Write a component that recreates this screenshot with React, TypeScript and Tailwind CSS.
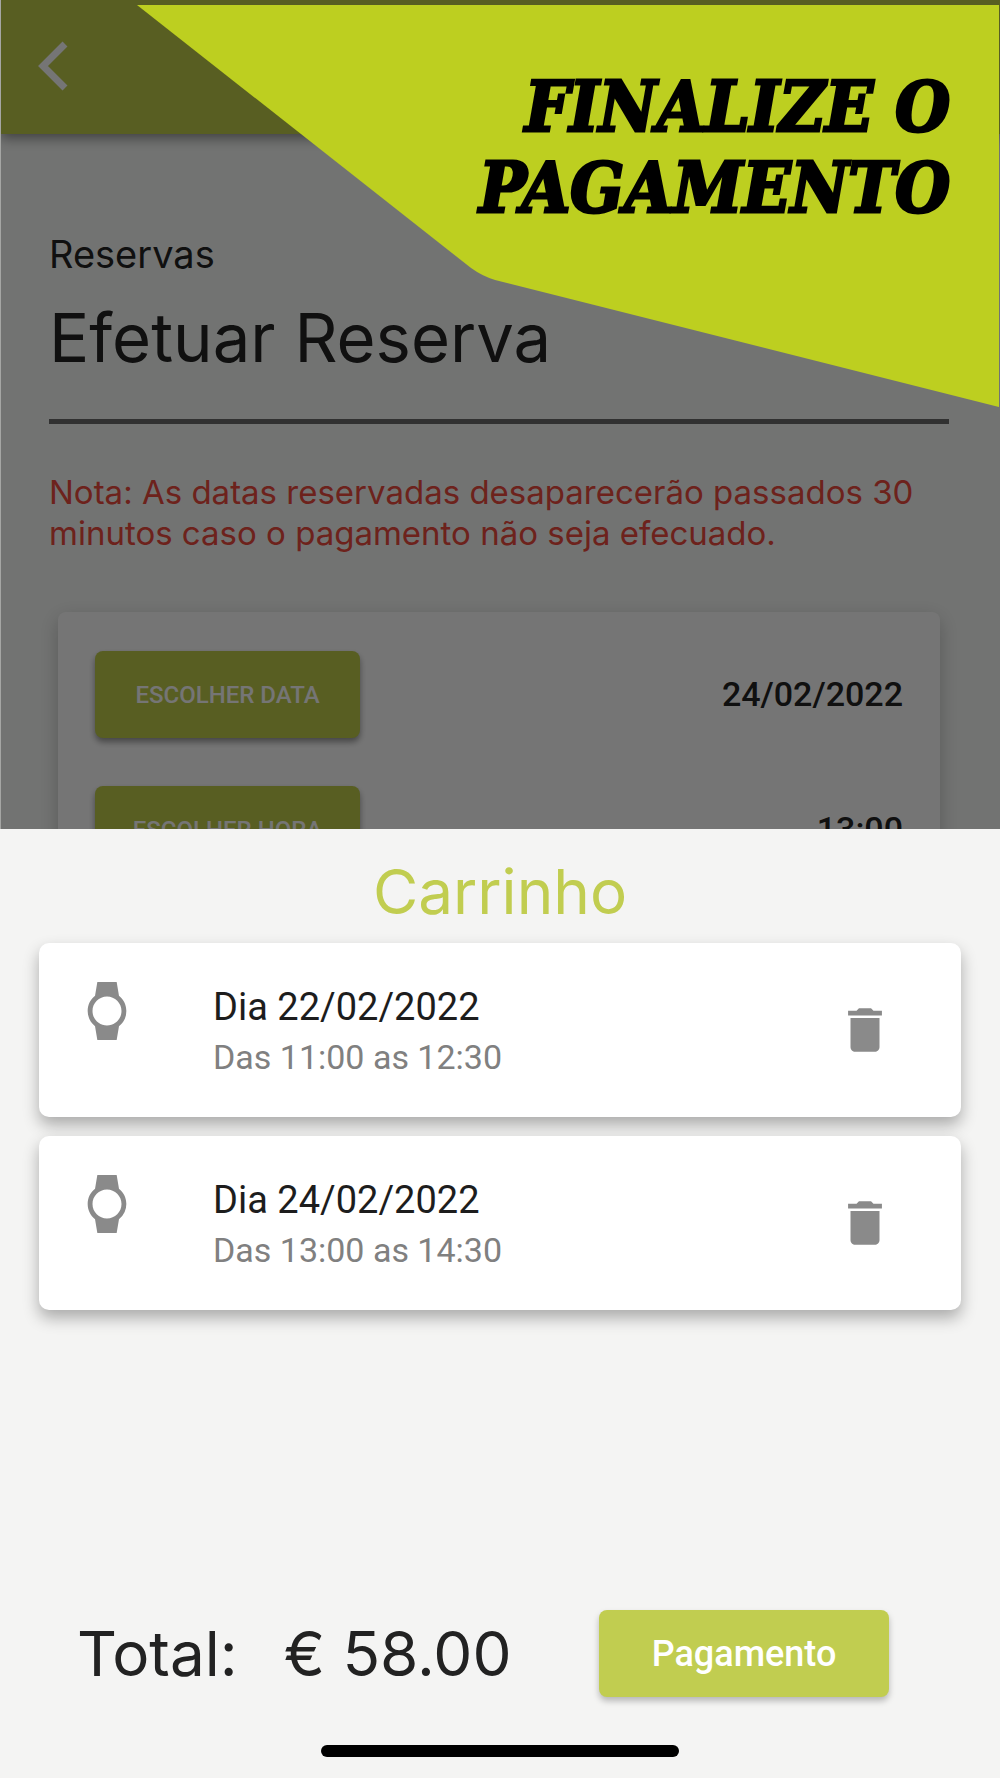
import React from "react";
import { MdDelete, MdWatch } from "react-icons/md";

const picks = [
  { label: "ESCOLHER DATA", value: "24/02/2022" },
  { label: "ESCOLHER HORA", value: "13:00" },
];

const items = [
  { day: "Dia 22/02/2022", hours: "Das 11:00 as 12:30" },
  { day: "Dia 24/02/2022", hours: "Das 13:00 as 14:30" },
];

function BookingScreen() {
  return (
    <section className="relative h-[829px] shrink-0 overflow-hidden border-l border-[#a5a6a4] bg-[#f9fbf9]">
      <header className="flex h-[134px] items-center bg-[#bfcc4a] px-[30px] shadow-[0_4px_12px_rgba(0,0,0,0.45)]">
        <button type="button" aria-label="Voltar" className="text-white">
          <svg className="h-14 w-10" viewBox="0 0 40 56" fill="none">
            <path d="M34 5L12 27L34 49" stroke="currentColor" strokeWidth="7" />
          </svg>
        </button>
      </header>

      <div className="pt-24 pr-[51px] pl-12 text-[#242424]">
        <p className="text-[38px] leading-[48px]">Reservas</p>
        <h1 className="mt-5 text-[67px] leading-[80px]">Efetuar Reserva</h1>
        <hr className="mt-[41px] border-t-[5px] border-[#6c6c6c]" />
        <p className="mt-12 text-[33px] leading-[41px] text-[#ee4a3e]">
          Nota: As datas reservadas desaparecerão passados 30 minutos caso o pagamento não seja efecuado.
        </p>

        <div className="mx-[9px] mt-[58px] flex flex-col gap-12 rounded-lg bg-white px-[37px] py-[39px] font-['Roboto',sans-serif] shadow-[0_6px_20px_rgba(0,0,0,0.22)]">
          {picks.map((p) => (
            <div key={p.label} className="flex items-center justify-between">
              <button
                type="button"
                className="h-[87px] w-[265px] rounded-lg bg-[#bfcc4a] text-[24px] font-medium text-white shadow-[0_4px_6px_rgba(0,0,0,0.4)]"
              >
                {p.label}
              </button>
              <span className="text-[34px] font-medium">{p.value}</span>
            </div>
          ))}
        </div>
      </div>

      <div className="absolute inset-0 bg-black/54" />

      <div className="absolute right-px top-[5px] w-[calc(86%+3px)]">
        <svg className="block w-full" viewBox="0 0 862 402" fill="#bdcf20">
          <path d="M0 0H862V402L358 275Q345 271 334 263Z" />
        </svg>
        <h2 className="absolute right-[49px] top-[61px] text-right font-['DejaVu_Serif_Condensed','DejaVu_Serif',serif] text-[70px] leading-[81px] font-bold italic text-black [-webkit-text-stroke:3px_black]">
          FINALIZE O
          <br />
          PAGAMENTO
        </h2>
      </div>
    </section>
  );
}

export default function App() {
  return (
    <main className="flex min-h-screen flex-col bg-[#f4f4f3] font-['Inter',sans-serif]">
      <BookingScreen />

      <section className="flex flex-1 flex-col">
        <h2 className="pt-[23px] text-center text-[62px] leading-[80px] text-[#c1cd50]">Carrinho</h2>

        <ul className="mx-[39px] mt-[11px] flex flex-col gap-[19px] font-['Roboto',sans-serif]">
          {items.map((it) => (
            <li
              key={it.day}
              className="flex h-[174px] rounded-[10px] bg-white px-[39px] pt-[39px] shadow-[0_8px_16px_rgba(0,0,0,0.3)]"
            >
              <MdWatch className="size-[58px] text-[#8a8a8a]" />
              <div className="ml-[77px] flex-1">
                <p className="text-[38px] leading-[50px] text-[#1d1d1d]">{it.day}</p>
                <p className="text-[34px] leading-[50px] text-[#808080]">{it.hours}</p>
              </div>
              <button type="button" aria-label={`Remover ${it.day}`} className="mr-7 mt-[19px] self-start text-[#8a8a8a]">
                <MdDelete className="size-[58px]" />
              </button>
            </li>
          ))}
        </ul>

        <div className="mt-auto flex items-center pl-[77px] pr-[111px] text-[62px] text-[#222222]">
          <span>Total:</span>
          <span className="ml-[46px]">€ 58.00</span>
          <button
            type="button"
            className="ml-auto h-[87px] w-[290px] rounded-lg bg-[#c1cd50] font-['Roboto',sans-serif] text-[36px] font-medium text-white shadow-[0_4px_6px_rgba(0,0,0,0.25)]"
          >
            Pagamento
          </button>
        </div>

        <div className="mx-auto mb-[21px] mt-[45px] h-3 w-[358px] rounded-full bg-black" />
      </section>
    </main>
  );
}
